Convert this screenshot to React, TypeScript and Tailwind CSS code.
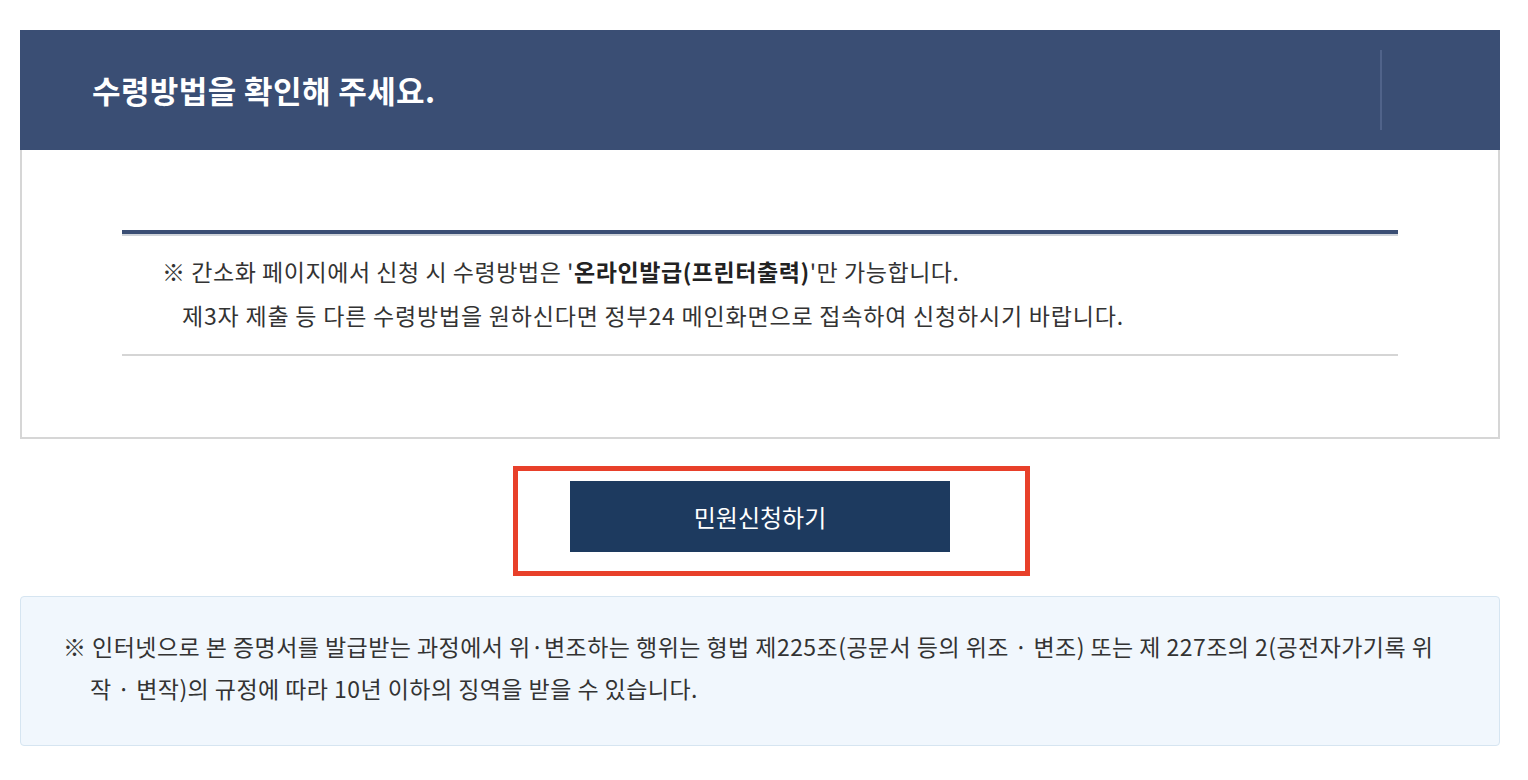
import React from 'react';

const font = { fontFamily: '"Noto Sans CJK KR", "Noto Sans", sans-serif' };

const App: React.FC = () => {
    return (
        <div className="min-h-screen bg-white pt-[30px] pb-[33px]" style={font}>
            <div className="w-[1480px] ml-[20px]">
                {/* Header */}
                <div className="h-[120px] bg-[#3a4e74] flex items-center justify-between">
                    <h2 className="pl-[72px] text-[31px] font-bold text-white tracking-[0.4px]">
                        수령방법을 확인해 주세요.
                    </h2>
                    <div className="w-[2px] h-[80px] bg-[#50638a] mr-[118px]" />
                </div>

                {/* Notice box */}
                <div className="border-x-2 border-b-2 border-[#d6d6d6] px-[100px] pt-[80px] pb-[81px]">
                    <div className="border-t-4 border-[#3a4e74]">
                        <div className="border-t-2 border-[#cfd3d9] border-b-2 border-b-[#d5d5d5] pt-[13px] pb-[17px] text-[23px] leading-[44px] text-[#333]">
                            <p className="pl-[40px] tracking-[0.55px]">
                                ※ 간소화 페이지에서 신청 시 수령방법은 '<b className="font-bold text-[#222]">온라인발급(프린터출력)</b>'만 가능합니다.
                            </p>
                            <p className="pl-[60px] tracking-[0.8px]">
                                제3자 제출 등 다른 수령방법을 원하신다면 정부24 메인화면으로 접속하여 신청하시기 바랍니다.
                            </p>
                        </div>
                    </div>
                </div>

                {/* Button */}
                <div className="flex justify-center mt-[42px] mb-[44px]">
                    <div className="relative">
                        <button
                            type="button"
                            className="w-[380px] h-[71px] bg-[#1d3a5f] text-white text-[24px]"
                        >
                            민원신청하기
                        </button>
                        <div className="absolute left-[-57px] top-[-15px] w-[517px] h-[110px] border-[5px] border-[#e8402a] pointer-events-none" />
                    </div>
                </div>

                {/* Warning box */}
                <div className="rounded-[4px] border border-[#d6e5f1] bg-[#f1f7fd] pl-[42px] pr-[40px] pt-[28px] pb-[36px] text-[23px] leading-[42px] text-[#333] tracking-[0.45px]">
                    <p className="whitespace-nowrap">
                        ※ 인터넷으로 본 증명서를 발급받는 과정에서 위·변조하는 행위는 형법 제225조(공문서 등의 위조 · 변조) 또는 제 227조의 2(공전자가기록 위
                    </p>
                    <p className="pl-[27px] whitespace-nowrap">
                        작 · 변작)의 규정에 따라 10년 이하의 징역을 받을 수 있습니다.
                    </p>
                </div>
            </div>
        </div>
    );
};

export default App;
